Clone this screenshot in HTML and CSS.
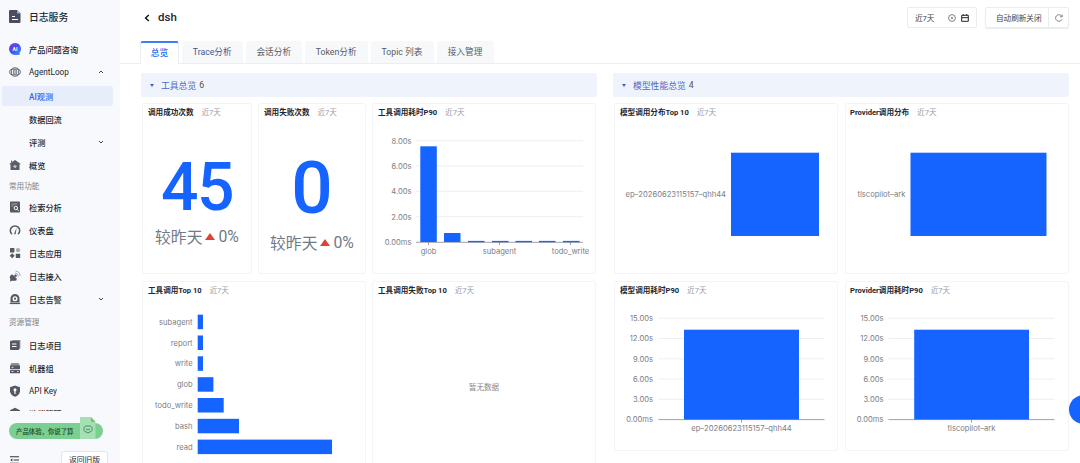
FILE: index.html
```html
<!DOCTYPE html>
<html lang="zh-CN">
<head>
    <meta charset="UTF-8">
    <meta name="viewport" content="width=device-width, initial-scale=1.0">
    <title>日志服务</title>
    <link rel="stylesheet" href="styles.css">
</head>
<body>
    <aside class="sidebar">
        <div class="brand">
            <svg class="icon" viewBox="0 0 12 13"><path d="M1 0h7l3.5 3.5V12a1 1 0 0 1-1 1H1a1 1 0 0 1-1-1V1a1 1 0 0 1 1-1z" fill="#4b4e63"/><path d="M8 0l3.5 3.5H8z" fill="#a7aabb"/><path d="M3 6.5h3M3 9.5h6" stroke="#fff" stroke-width="1.2"/></svg>
            <span>日志服务</span>
        </div>

        <nav class="nav">
            <a class="item">
                <svg class="icon" viewBox="0 0 12 12"><defs><linearGradient id="ai" x1="0" y1="0" x2="1" y2="1"><stop offset="0" stop-color="#7a35e8"/><stop offset="0.5" stop-color="#4b4df0"/><stop offset="1" stop-color="#2fa4ff"/></linearGradient></defs><path d="M6 0a6 6 0 0 1 4.8 9.6L10.5 12H6A6 6 0 0 1 6 0z" fill="url(#ai)"/><text x="6" y="8" class="ai-text">AI</text></svg>
                <span>产品问题咨询</span>
            </a>
            <a class="item">
                <svg class="icon" viewBox="0 0 12 12"><g fill="none" stroke="#62666f"><rect x="0.6" y="3.2" width="10.8" height="5.6" rx="2.8"/><rect x="2.6" y="1.8" width="6.8" height="8.4" rx="2.6"/><path d="M4.6 4v4M6 3v6M7.4 4v4" stroke-width="0.8"/></g></svg>
                <span>AgentLoop</span>
                <svg class="arrow" viewBox="0 0 6 6"><path d="M1 4l2-2 2 2"/></svg>
            </a>
            <a class="item sub active"><span>AI观测</span></a>
            <a class="item sub"><span>数据回流</span></a>
            <a class="item sub">
                <span>评测</span>
                <svg class="arrow" viewBox="0 0 6 6"><path d="M1 2l2 2 2-2"/></svg>
            </a>
            <a class="item">
                <svg class="icon" viewBox="0 0 12 12"><path d="M6 1l5.5 3.8-.6.8L10.5 5.3V11h-9V5.3l-.4.3-.6-.8z" fill="#5a5e68"/><path d="M2.5 1.5v2" stroke="#5a5e68"/><path d="M6 9.3L4.3 7.6a1 1 0 0 1 1.7-1 1 1 0 0 1 1.7 1z" fill="#c9ccd3"/></svg>
                <span>概览</span>
            </a>

            <div class="group">常用功能</div>
            <a class="item">
                <svg class="icon" viewBox="0 0 12 12"><rect x="1" y="0.5" width="10" height="11" rx="0.8" fill="#555963"/><path d="M2.5 3h6M2.5 5h2" stroke="#b9bdc6" stroke-width="0.8"/><circle cx="6.8" cy="7" r="1.7" fill="none" stroke="#fff"/><path d="M8 8.2l1.6 1.6" stroke="#fff"/></svg>
                <span>检索分析</span>
            </a>
            <a class="item">
                <svg class="icon" viewBox="0 0 12 12"><path d="M3 10.2a4.7 4.7 0 1 1 6 0" fill="none" stroke="#555963" stroke-width="1.5"/><path d="M7.6 3.8L6.7 10a1 1 0 0 1-1.6-.3z" fill="#555963"/></svg>
                <span>仪表盘</span>
            </a>
            <a class="item">
                <svg class="icon" viewBox="0 0 12 12"><rect x="1" y="1" width="4.4" height="4.4" rx="0.5" fill="#555963"/><circle cx="9" cy="3.2" r="2.1" fill="#a5a9b3"/><path d="M3.2 6.3l2.5 2.5-2.5 2.5L.7 8.8z" fill="#555963"/><rect x="6.8" y="6.7" width="4.4" height="4.4" rx="0.5" fill="#555963"/></svg>
                <span>日志应用</span>
            </a>
            <a class="item">
                <svg class="icon" viewBox="0 0 12 12"><path d="M1.8 5.2a1.5 1.5 0 0 1 2-.4l3.8 3.8a1.7 1.7 0 0 1-1.5 2.2H3L1 11.5l.3-2.5a3 3 0 0 1 .5-3.8z" fill="#555963"/><circle cx="6.5" cy="5.8" r="1.3" fill="#555963"/><path d="M6 3.2a3.3 3.3 0 0 1 3.3 3.3M6.5 1a5 5 0 0 1 4.7 5" fill="none" stroke="#a5a9b3"/></svg>
                <span>日志接入</span>
            </a>
            <a class="item">
                <svg class="icon" viewBox="0 0 12 12"><path d="M1.5 9.5V5.500a4.500 4.500 0 0 1 9 0v4z" fill="#555963"/><path d="M.8 10.5h10.4" stroke="#555963" stroke-width="1.2"/><circle cx="6" cy="5.7" r="2.5" fill="#fff"/><circle cx="6" cy="5.7" r="1.1" fill="#555963"/></svg>
                <span>日志告警</span>
                <svg class="arrow" viewBox="0 0 6 6"><path d="M1 2l2 2 2-2"/></svg>
            </a>

            <div class="group">资源管理</div>
            <a class="item">
                <svg class="icon" viewBox="0 0 12 12"><path d="M3 1h8v8.5h-1z" fill="#9599a4"/><path d="M10 1h1.3v8L10 10.5z" fill="#777b86"/><rect x="1" y="1.8" width="9" height="9.2" rx="0.7" fill="#555963"/><path d="M3 5h4.5M3 7.5h4.5" stroke="#fff"/></svg>
                <span>日志项目</span>
            </a>
            <a class="item">
                <svg class="icon" viewBox="0 0 12 12"><path d="M2.5 1h7l1.5 3H1z" fill="#8c909b"/><rect x="1" y="3.5" width="10" height="3.6" rx="0.6" fill="#555963"/><rect x="1" y="7.7" width="10" height="3.6" rx="0.6" fill="#555963"/><path d="M2.5 5.3h2M2.5 9.5h2M8 9.5h1.5" stroke="#fff" stroke-width="0.8"/></svg>
                <span>机器组</span>
            </a>
            <a class="item">
                <svg class="icon" viewBox="0 0 12 12"><path d="M6 .4l5 1.8v4c0 2.7-2.5 4.6-5 5.6-2.5-1-5-2.9-5-5.6v-4z" fill="#555963"/><circle cx="6" cy="4.7" r="1.5" fill="#fff"/><path d="M6 5v4" stroke="#fff" stroke-width="1.2"/></svg>
                <span>API Key</span>
            </a>
            <a class="item last">
                <svg class="icon" viewBox="0 0 12 12"><path d="M6 .8l5 2.5v5.4l-5 2.5-5-2.500V3.300z" fill="#555963"/></svg>
                <span>链端管理</span>
            </a>
        </nav>

        <div class="feedback">
            <span>产品体验，你说了算</span>
            <svg class="note" viewBox="0 0 16 22"><path d="M0 0h11l4.5 5V22H0z" fill="#a5dfb4"/><path d="M11 0l4.5 5H11z" fill="#6dc686"/><path d="M5.5 9h5l1.5 1.5v3L10.5 15H9l-1 1.2L7 15H5.5L4 13.5v-3z" fill="none" stroke="#327d4b" stroke-width="0.8"/><path d="M6 12q2 1.5 4 0" fill="none" stroke="#327d4b" stroke-width="0.8"/></svg>
        </div>

        <div class="bottom">
            <svg class="fold" viewBox="0 0 9 8"><path d="M0 .7h9M3.5 4H9M0 7.3h9" stroke="#333" stroke-width="1.1"/><path d="M2.3 2.5v3L.3 4z" fill="#333"/></svg>
            <button class="old">返回旧版</button>
        </div>
    </aside>

    <main class="main">
        <header class="head">
            <svg class="back" viewBox="0 0 6 8"><path d="M4.8 1L1.6 4l3.2 3"/></svg>
            <h1>dsh</h1>
            <div class="picker">
                <span>近7天</span>
                <svg viewBox="0 0 8 8"><circle cx="4" cy="4" r="3.4"/><path d="M2.8 2.8l2.4 2.4M5.2 2.8L2.8 5.2" stroke-width="0.7"/></svg>
                <svg class="dark" viewBox="0 0 8 8"><path d="M.7 1.3h6.6v6H.7zM.7 3.7h6.6M2.3 0v1.5M5.7 0v1.5"/></svg>
            </div>
            <div class="refresh">
                <span>自动刷新关闭</span>
                <div class="reload"><svg viewBox="0 0 8 8"><path d="M7 5.2A3.3 3.3 0 1 1 6.7 2.2M7.2.6v2.2H5"/></svg></div>
            </div>
        </header>

        <div class="tabs">
            <a class="tab active">总览</a>
            <a class="tab trace">Trace分析</a>
            <a class="tab session">会话分析</a>
            <a class="tab token">Token分析</a>
            <a class="tab topic">Topic 列表</a>
            <a class="tab access">接入管理</a>
        </div>

        <div class="panels">
            <section>
                <div class="section-title"><i></i>工具总览 <b>6</b></div>
                <div class="cards tools">
                    <div class="card">
                        <h2>调用成功次数 <small>近7天</small></h2>
                        <div class="stat">
                            <strong>45</strong>
                            <p>较昨天<i class="up"></i>0%</p>
                        </div>
                    </div>
                    <div class="card">
                        <h2>调用失败次数 <small>近7天</small></h2>
                        <div class="stat large">
                            <strong>0</strong>
                            <p>较昨天<i class="up"></i>0%</p>
                        </div>
                    </div>
                    <div class="card">
                        <h2>工具调用耗时P90 <small>近7天</small></h2>
                        <svg class="chart" viewBox="0 0 224 152">
                            <path class="grid" d="M44 19.7h167M44 45h167M44 70.3h167M44 95.7h167"/>
                            <g class="y">
                                <text x="39.5" y="22.5">8.00s</text>
                                <text x="39.5" y="47.8">6.00s</text>
                                <text x="39.5" y="73.1">4.00s</text>
                                <text x="39.5" y="98.5">2.00s</text>
                                <text x="39.5" y="123.9">0.00ms</text>
                            </g>
                            <path class="axis" d="M44 121.3h167M56.5 121v3M127.5 121v3M198.5 121v3"/>
                            <g class="bar">
                                <rect x="48.3" y="25.3" width="16.5" height="95.7"/>
                                <rect x="72" y="112" width="16.5" height="9"/>
                                <rect x="96" y="119.9" width="16.5" height="1.3"/>
                                <rect x="120" y="119.9" width="16.5" height="1.3"/>
                                <rect x="143.5" y="119.9" width="16.5" height="1.3"/>
                                <rect x="167" y="119.9" width="16.5" height="1.3"/>
                                <rect x="191" y="119.9" width="16.5" height="1.3"/>
                            </g>
                            <g class="x">
                                <text x="56.5" y="132.5">glob</text>
                                <text x="127.5" y="132.5">subagent</text>
                                <text x="198.5" y="132.5">todo_write</text>
                            </g>
                        </svg>
                    </div>
                    <div class="card wide">
                        <h2>工具调用Top 10 <small>近7天</small></h2>
                        <svg class="chart" viewBox="0 0 224 172">
                            <g class="y">
                                <text x="50.6" y="25.7">subagent</text>
                                <text x="50.6" y="46.5">report</text>
                                <text x="50.6" y="67.3">write</text>
                                <text x="50.6" y="88.2">glob</text>
                                <text x="50.6" y="109">todo_write</text>
                                <text x="50.6" y="129.8">bash</text>
                                <text x="50.6" y="150.6">read</text>
                            </g>
                            <g class="bar">
                                <rect x="55.7" y="15.7" width="5.3" height="14.5"/>
                                <rect x="55.7" y="36.5" width="5.3" height="14.5"/>
                                <rect x="55.7" y="57.3" width="5.3" height="14.5"/>
                                <rect x="55.7" y="78.2" width="15.7" height="14.5"/>
                                <rect x="55.7" y="99" width="26" height="14.5"/>
                                <rect x="55.7" y="119.8" width="41.3" height="14.5"/>
                                <rect x="55.7" y="140.6" width="134.3" height="14.5"/>
                            </g>
                        </svg>
                    </div>
                    <div class="card">
                        <h2>工具调用失败Top 10 <small>近7天</small></h2>
                        <div class="empty">暂无数据</div>
                    </div>
                </div>
            </section>

            <section>
                <div class="section-title"><i></i>模型性能总览 <b>4</b></div>
                <div class="cards models">
                    <div class="card">
                        <h2>模型调用分布Top 10 <small>近7天</small></h2>
                        <svg class="chart" viewBox="0 0 224 152">
                            <g class="y"><text x="112" y="76.4">ep–20260623115157–qhh44</text></g>
                            <g class="bar"><rect x="117" y="31.7" width="88" height="83.3"/></g>
                        </svg>
                    </div>
                    <div class="card provider">
                        <h2>Provider调用分布 <small>近7天</small></h2>
                        <svg class="chart" viewBox="0 0 224 152">
                            <g class="y"><text x="60.3" y="76.4">tlscopilot–ark</text></g>
                            <g class="bar"><rect x="65.5" y="31.7" width="136" height="83.3"/></g>
                        </svg>
                    </div>
                    <div class="card short">
                        <h2>模型调用耗时P90 <small>近7天</small></h2>
                        <svg class="chart" viewBox="0 0 224 152">
                            <path class="grid" d="M44.5 19.3h166M44.5 39.5h166M44.5 59.8h166M44.5 80h166M44.5 100.3h166"/>
                            <g class="y">
                                <text x="39" y="22">15.00s</text>
                                <text x="39" y="42.2">12.00s</text>
                                <text x="39" y="62.5">9.00s</text>
                                <text x="39" y="82.7">6.00s</text>
                                <text x="39" y="103">3.00s</text>
                                <text x="39" y="123.2">0.00ms</text>
                            </g>
                            <g class="bar"><rect x="70" y="30.7" width="115" height="90"/></g>
                            <path class="axis" d="M44.5 120.6h166M127.5 120.6v3"/>
                            <g class="x"><text x="127.5" y="132">ep–20260623115157–qhh44</text></g>
                        </svg>
                    </div>
                    <div class="card short provider">
                        <h2>Provider调用耗时P90 <small>近7天</small></h2>
                        <svg class="chart" viewBox="0 0 224 152">
                            <path class="grid" d="M43.5 19.3h166M43.5 39.5h166M43.5 59.8h166M43.5 80h166M43.5 100.3h166"/>
                            <g class="y">
                                <text x="38.5" y="22">15.00s</text>
                                <text x="38.5" y="42.2">12.00s</text>
                                <text x="38.5" y="62.5">9.00s</text>
                                <text x="38.5" y="82.7">6.00s</text>
                                <text x="38.5" y="103">3.00s</text>
                                <text x="38.5" y="123.2">0.00ms</text>
                            </g>
                            <g class="bar"><rect x="69.2" y="30.7" width="114.8" height="90"/></g>
                            <path class="axis" d="M43.5 120.6h166M126.5 120.6v3"/>
                            <g class="x"><text x="126.5" y="132">tlscopilot–ark</text></g>
                        </svg>
                    </div>
                </div>
            </section>
        </div>
    </main>

    <div class="float-button"></div>
</body>
</html>
```
FILE: styles.css
```css
* {
    box-sizing: border-box;
}

body {
    margin: 0;
    height: 463px;
    display: flex;
    overflow: hidden;
    position: relative;
    background: #fff;
    color: #23262d;
    font-family: Roboto, "Noto Sans CJK SC", sans-serif;
    font-size: 8.2px;
}

h1, h2, p {
    margin: 0;
}

/* sidebar */
.sidebar {
    width: 120px;
    height: 463px;
    flex: none;
    background: #f7f9fc;
    display: flex;
    flex-direction: column;
}

.brand {
    height: 37px;
    flex: none;
    padding: 0 0 4px 9px;
    display: flex;
    align-items: center;
    gap: 8px;
    font-size: 9.8px;
    font-weight: 500;
}

.brand .icon {
    height: 13px;
}

.nav {
    height: 374px;
    flex: none;
    overflow: hidden;
}

.icon {
    width: 12px;
    height: 12px;
    flex: none;
}

.ai-text {
    font: bold 5px Roboto, sans-serif;
    fill: #fff;
    text-anchor: middle;
}

.item {
    height: 23px;
    padding: 0 16px 0 9px;
    display: flex;
    align-items: center;
    gap: 8px;
    font-weight: 450;
    white-space: nowrap;
}

.item.sub {
    padding-left: 29px;
}

.item.active {
    height: 20px;
    margin: 3px 7px 1px 2px;
    padding-left: 27px;
    padding-bottom: 1px;
    background: #e7edfa;
    border-radius: 2px;
    color: #2b66f6;
    font-weight: 500;
}

.item.last {
    margin-top: -1px;
}

.arrow {
    width: 6px;
    height: 6px;
    margin-left: auto;
    fill: none;
    stroke: #444851;
}

.group {
    height: 19px;
    padding-left: 9px;
    line-height: 21px;
    font-size: 7.6px;
    color: #7d828d;
}

.group ~ .group {
    height: 23px;
    line-height: 26px;
}

.feedback {
    width: 94px;
    height: 16px;
    flex: none;
    margin: 12px 0 0 9px;
    padding-left: 7px;
    display: flex;
    align-items: center;
    position: relative;
    border-radius: 8px;
    background: #7bcf90;
    color: #17472a;
    font-size: 6.4px;
    font-weight: 500;
}

.note {
    position: absolute;
    left: 71px;
    top: -6px;
    width: 16px;
    height: 22px;
}

.bottom {
    flex: 1;
    padding: 12px 12px 0 10px;
    display: flex;
    align-items: flex-start;
    justify-content: space-between;
}

.fold {
    width: 9px;
    height: 8px;
    margin-top: 5px;
}

.old {
    width: 47px;
    height: 16px;
    flex: none;
    padding: 0;
    border: 1px solid #e1e4e9;
    border-radius: 3px;
    background: #fff;
    color: #23262d;
    font: 7.8px Roboto, "Noto Sans CJK SC", sans-serif;
}

/* header */
.main {
    flex: 1;
    min-width: 0;
}

.head {
    height: 41px;
    padding: 7px 11px 0 24px;
    display: flex;
    align-items: flex-start;
}

.head svg {
    width: 8px;
    height: 8px;
    fill: none;
    stroke: #62666f;
    stroke-width: 0.8;
}

.head .back {
    width: 6px;
    margin-top: 7px;
    stroke: #15171b;
    stroke-width: 1.5;
}

.head .dark {
    stroke: #23262d;
    stroke-width: 1;
}

h1 {
    margin: 0 auto 0 8px;
    line-height: 21px;
    font-size: 11.5px;
    font-weight: 500;
}

.picker, .refresh {
    height: 21px;
    display: flex;
    align-items: center;
    border: 1px solid #eaecf0;
    border-radius: 2px;
    color: #40444d;
    font-size: 7.6px;
}

.picker {
    width: 70px;
    padding-left: 7px;
    gap: 5px;
}

.picker span {
    width: 28px;
}

.refresh {
    width: 84px;
    margin-left: 8px;
    justify-content: space-between;
    box-shadow: 0 1px 1px #e9ebee;
}

.refresh span {
    padding-left: 10px;
}

.reload {
    width: 20px;
    height: 19px;
    display: flex;
    align-items: center;
    justify-content: center;
    border-left: 1px solid #eaecf0;
}

/* tabs */
.tabs {
    height: 23px;
    padding-left: 20px;
    display: flex;
    gap: 3px;
    border-bottom: 1px solid #eceef1;
}

.tab {
    height: 22px;
    width: 57px;
    line-height: 23px;
    text-align: center;
    white-space: nowrap;
    font-size: 8.7px;
    color: #565b66;
    background: #f6f8fa;
    border-radius: 3px 3px 0 0;
}

.tab.active {
    width: 39px;
    height: 23px;
    line-height: 20px;
    color: #2b66f6;
    font-weight: 500;
    background: #fff;
    border: 1px solid #eceef1;
    border-top: 2px solid #3d7bf7;
    border-bottom: 0;
}

.tab.trace {
    width: 60.5px;
    color: #46568b;
}

.tab.session {
    width: 56.5px;
}

.tab.token {
    width: 62.5px;
}

.tab.topic {
    width: 63px;
}

/* panels */
.panels {
    padding: 9px 11px 0 21px;
    display: flex;
    gap: 16px;
}

.panels section {
    width: 456px;
}

.section-title {
    height: 24px;
    padding-left: 9px;
    display: flex;
    align-items: center;
    gap: 3px;
    background: #eff3fb;
    border-radius: 2px;
    color: #4c6bc9;
    font-size: 8.8px;
}

.section-title i {
    margin-right: 4px;
    border: 2.5px solid transparent;
    border-top: 3px solid #3f62c8;
    border-bottom: 0;
}

.section-title b {
    font-weight: 400;
    color: #4e535e;
}

.cards {
    margin: 6px 0 0 1px;
    display: grid;
    grid-template-rows: 171px 190px;
    row-gap: 7px;
}

.tools {
    grid-template-columns: 110px 108px 224px;
    column-gap: 6px;
}

.models {
    grid-template-columns: 224px 224px;
    column-gap: 7px;
}

.card {
    overflow: hidden;
    border-radius: 3px;
    box-shadow: inset 0 0 0 1px #f3f4f6;
}

.card.wide {
    grid-column: span 2;
}

.card.short {
    height: 170px;
}

h2 {
    height: 18px;
    padding: 2px 0 0 6px;
    line-height: 16px;
    white-space: nowrap;
    font-size: 7.6px;
    font-weight: 700;
}

.provider h2 {
    padding-left: 5px;
}

h2 small {
    margin-left: 6px;
    font-size: 7.6px;
    font-weight: 400;
    color: #999da6;
}

.stat {
    padding-top: 34px;
    text-align: center;
    color: #1664ff;
}

.stat strong {
    display: block;
    height: 66px;
    line-height: 66px;
    font-size: 66px;
    font-weight: 500;
    letter-spacing: -1.5px;
}

.stat p {
    height: 24px;
    margin-top: 3px;
    display: flex;
    align-items: center;
    justify-content: center;
    font-size: 15.8px;
    color: #737a87;
}

.stat.large strong {
    font-size: 73px;
    letter-spacing: 0;
}

.stat.large p {
    margin-top: 9px;
}

.up {
    margin: 0 3px;
    border: 5px solid transparent;
    border-top: 0;
    border-bottom: 7px solid #dc4437;
}

.empty {
    padding-top: 83px;
    text-align: center;
    line-height: 12px;
    font-size: 7.6px;
    color: #858a94;
}

/* charts */
.chart {
    display: block;
    width: 224px;
    font-family: Inter, sans-serif;
    font-size: 7.6px;
}

.chart text {
    fill: #7b7e85;
}

.chart .y {
    text-anchor: end;
}

.chart .x {
    text-anchor: middle;
}

.chart .bar {
    fill: #1664ff;
}

.chart .grid {
    stroke: #eaebee;
    stroke-width: 0.8;
}

.chart .axis {
    stroke: #747983;
    stroke-width: 0.7;
}

.float-button {
    position: absolute;
    left: 1069px;
    top: 395px;
    width: 29px;
    height: 29px;
    border-radius: 50%;
    background: #1664ff;
}
```
